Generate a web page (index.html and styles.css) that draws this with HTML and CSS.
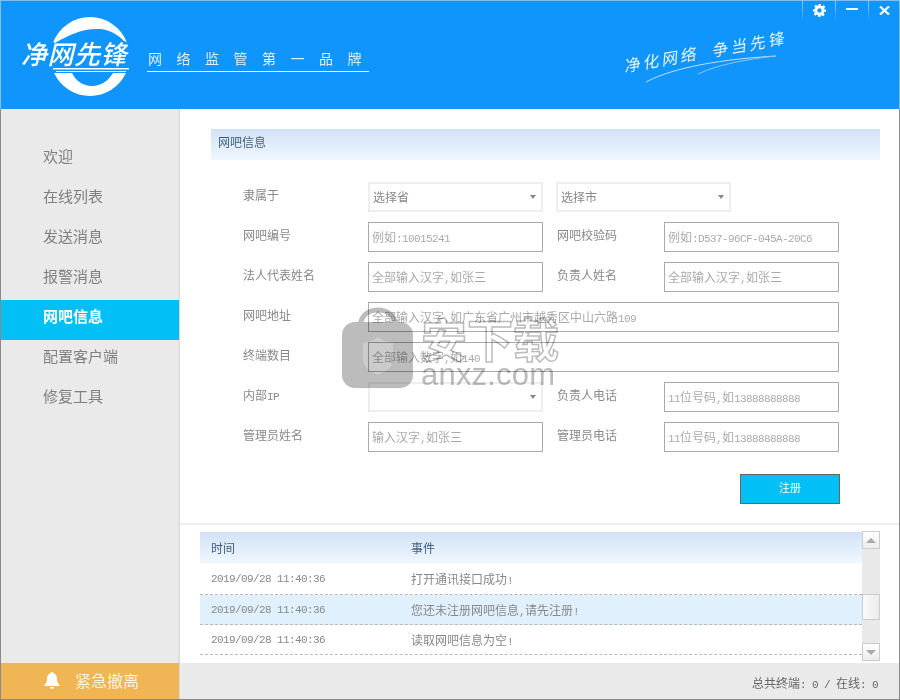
FILE: index.html
```html
<!DOCTYPE html>
<html lang="zh-CN">
<head>
<meta charset="utf-8">
<title>净网先锋</title>
<link rel="stylesheet" href="styles.css">
</head>
<body>
<div class="window">
  <header class="header">
    <svg class="logo-mark" width="90" height="84" viewBox="50 15 90 84">
      <path fill="#fff" d="M53.300 42A39.500 39.500 0 0 1 126.700 42L124 41C117 34 110 30 100 29C84 28 70 34 55 43Z"/>
      <path fill="#fff" d="M54.100 73H72C76 81 83 86 92 86C101 86 108 81 113 73H125.900A39.500 39.500 0 0 1 54.100 73Z"/>
      <path fill="#fff" d="M53 68H129V69.500H53ZM56 71H126V72H56Z"/>
    </svg>
    <div class="logo-text">净网先锋</div>
    <div class="tagline">网络监管第一品牌</div>
    <div class="slogan">净化网络&nbsp;&nbsp;争当先锋</div>
    <svg class="swoosh" width="145" height="40" viewBox="0 0 145 40">
      <path fill="none" stroke="#bcdffb" stroke-width="1" d="M2 35C30 20 80 12 132 9"/>
      <path fill="none" stroke="#8cc8f8" stroke-width="1" d="M54 27C75 17 105 12 132 9"/>
    </svg>
    <div class="winbtns">
      <div class="winbtn">
        <svg width="13" height="13" viewBox="0 0 24 24"><path fill="#fff" fill-rule="evenodd" d="M10 0h4l.6 3.300 2.300 1 2.800-1.900 2.900 2.900-1.900 2.800 1 2.300L24 10.000v4l-3.300.6-1 2.300 1.900 2.800-2.900 2.900-2.800-1.900-2.300 1L14 24h-4l-.6-3.300-2.300-1-2.800 1.900-2.900-2.900 1.900-2.800-1-2.300L0 14v-4l3.300-.6 1-2.300-1.900-2.800 2.900-2.900 2.800 1.900 2.300-1zM12 8a4 4 0 1 0 0 8 4 4 0 0 0 0-8z"/></svg>
      </div>
      <div class="winbtn"><span class="min-bar"></span></div>
      <div class="winbtn last">
        <svg width="11" height="9" viewBox="0 0 11 9"><path stroke="#fff" stroke-width="2.200" d="M1 .5l9 8M10 .5l-9 8"/></svg>
      </div>
    </div>
  </header>
  <div class="main">
    <aside class="sidebar">
      <nav class="nav">
        <div class="nav-item">欢迎</div>
        <div class="nav-item">在线列表</div>
        <div class="nav-item">发送消息</div>
        <div class="nav-item">报警消息</div>
        <div class="nav-item active">网吧信息</div>
        <div class="nav-item">配置客户端</div>
        <div class="nav-item">修复工具</div>
      </nav>
      <div class="alarm">
        <svg width="16" height="17" viewBox="0 0 16 17"><path fill="#fff" d="M8 0a1.500 1.500 0 0 1 1.400 1.300C12 2 13 4.500 13 7c0 3 1 4.500 2.500 6v1H.5v-1C2 11.500 3 10 3 7c0-2.500 1-5 3.600-5.700A1.500 1.500 0 0 1 8 0zM6 15h4a2 2 0 0 1-4 0z"/></svg>
        <span>紧急撤离</span>
      </div>
    </aside>
    <section class="content">
      <div class="panel">
        <div class="panel-title">网吧信息</div>
        <div class="form">
          <div class="row">
            <div class="lbl">隶属于</div>
            <div class="select"><span>选择省</span><i class="caret"></i></div>
            <div class="select second"><span>选择市</span><i class="caret"></i></div>
          </div>
          <div class="row">
            <div class="lbl">网吧编号</div>
            <div class="field">例如<span class="num">:10015241</span></div>
            <div class="lbl lbl2">网吧校验码</div>
            <div class="field">例如<span class="num">:D537-96CF-045A-20C6</span></div>
          </div>
          <div class="row">
            <div class="lbl">法人代表姓名</div>
            <div class="field">全部输入汉字<span class="num">,</span>如张三</div>
            <div class="lbl lbl2">负责人姓名</div>
            <div class="field">全部输入汉字<span class="num">,</span>如张三</div>
          </div>
          <div class="row">
            <div class="lbl">网吧地址</div>
            <div class="field wide">全部输入汉字<span class="num">,</span>如广东省广州市越秀区中山六路<span class="num">109</span></div>
          </div>
          <div class="row">
            <div class="lbl">终端数目</div>
            <div class="field wide">全部输入数字<span class="num">,</span>如<span class="num">140</span></div>
          </div>
          <div class="row">
            <div class="lbl">内部<span class="num">IP</span></div>
            <div class="select end"><i class="caret"></i></div>
            <div class="lbl lbl2">负责人电话</div>
            <div class="field"><span class="num">11</span>位号码<span class="num">,</span>如<span class="num">13888888888</span></div>
          </div>
          <div class="row">
            <div class="lbl">管理员姓名</div>
            <div class="field">输入汉字<span class="num">,</span>如张三</div>
            <div class="lbl lbl2">管理员电话</div>
            <div class="field"><span class="num">11</span>位号码<span class="num">,</span>如<span class="num">13888888888</span></div>
          </div>
        </div>
        <div class="actions"><div class="btn">注册</div></div>
      </div>
      <div class="log">
        <div class="log-table">
          <div class="log-head"><div class="c-time">时间</div><div>事件</div></div>
          <div class="log-row"><div class="c-time num">2019/09/28 11:40:36</div><div>打开通讯接口成功<span class="num">!</span></div></div>
          <div class="log-row alt"><div class="c-time num">2019/09/28 11:40:36</div><div>您还未注册网吧信息<span class="num">,</span>请先注册<span class="num">!</span></div></div>
          <div class="log-row"><div class="c-time num">2019/09/28 11:40:36</div><div>读取网吧信息为空<span class="num">!</span></div></div>
        </div>
        <div class="scrollbar">
          <div class="sb-btn"><i class="tri up"></i></div>
          <div class="sb-track"><div class="sb-thumb"></div></div>
          <div class="sb-btn"><i class="tri down"></i></div>
        </div>
      </div>
      <div class="status"><span>总共终端<span class="num">: 0 / </span>在线<span class="num">: 0</span></span></div>
    </section>
  </div>
  <div class="watermark">
    <svg width="72" height="82" viewBox="0 0 72 82">
      <path fill="none" stroke="#bcbcbc" stroke-width="5" d="M18 18C20 7 28 3 36 3C44 3 52 7 54 18"/>
      <rect x="0" y="15" width="71" height="66" rx="13" fill="#bcbcbc"/>
      <path fill="#cbcbcb" d="M21 36C28 35 32 33 36 30C40 33 45 35 51 36V52C51 61 43 65 36 68C29 65 21 61 21 52Z"/>
    </svg>
    <div class="wm-text">
      <div class="wm-cn">安下载</div>
      <div class="wm-en">anxz.com</div>
    </div>
  </div>
</div>
</body>
</html>
```
FILE: styles.css
```css
* { box-sizing: border-box; }
html, body { margin: 0; padding: 0; background: #fff; }
body { font-family: "Noto Sans CJK SC", "Liberation Sans", sans-serif; font-size: 12px; color: #888; }
.window { position: relative; width: 900px; height: 700px; display: flex; flex-direction: column; overflow: hidden; }
.header { position: relative; flex: 0 0 109px; background: #0f95fb; border: 1px solid #7fc0f2; border-bottom: 0; }
.logo-mark { position: absolute; left: 49px; top: 14px; }
.logo-text { position: absolute; left: 20px; top: 34px; color: #fff; font-size: 26px; line-height: 36px; font-style: italic; font-weight: 500; white-space: nowrap; letter-spacing: .5px; }
.tagline { position: absolute; left: 146px; top: 46px; width: 222px; height: 25px; padding-left: 1px; border-bottom: 1px solid #fff; color: #dff0fe; font-size: 14px; line-height: 22px; letter-spacing: 14.500px; white-space: nowrap; }
.slogan { position: absolute; left: 621px; top: 38px; color: #e6f3fe; font-size: 16px; line-height: 24px; letter-spacing: 3px; white-space: nowrap; transform: rotate(-10deg); font-style: italic; }
.swoosh { position: absolute; left: 643px; top: 46px; }
.winbtns { position: absolute; right: 0; top: 0; display: flex; }
.winbtn { width: 33px; height: 20px; display: flex; align-items: center; justify-content: center; border-left: 1px solid; border-image: linear-gradient(#9bd0f7, #0f95fb) 1; padding-bottom: 2px; }
.winbtn.last { width: 31px; }
.min-bar { display: block; width: 12px; height: 2px; background: #fff; margin-bottom: 2px; }
.main { flex: 1; display: flex; min-height: 0; border-left: 1px solid #8a8a8a; border-right: 1px solid #8a8a8a; border-bottom: 1px solid #8a8a8a; }
.sidebar { flex: 0 0 179px; display: flex; flex-direction: column; background: #eaeaea; box-shadow: inset -2px 0 2px -1px #d4d4d4; }
.nav { flex: 1; padding-top: 31px; }
.nav-item { height: 40px; line-height: 32px; padding-left: 42px; font-size: 15px; color: #808080; }
.nav-item.active { background: #02bff5; color: #fff; font-weight: 700; margin-right: 1px; }
.alarm { flex: 0 0 36px; display: flex; align-items: center; padding: 0 0 2px 43px; gap: 15px; background: #f0b655; color: #fdf3df; font-size: 16px; margin-right: 1px; }
.content { flex: 1; display: flex; flex-direction: column; min-width: 0; }
.panel { flex: 0 0 416px; padding: 20px 19px 0 31px; border-bottom: 2px solid #eee; }
.panel-title { height: 31px; line-height: 26px; padding-left: 7px; background: linear-gradient(#d2e2f5, #f0f7fe); color: #3f5f80; }
.form { padding: 22px 0 0 32px; }
.row { display: flex; height: 30px; margin-bottom: 10px; }
.lbl { width: 125px; line-height: 26px; color: #888; }
.lbl2 { width: 107px; margin-left: 14px; }
.field { width: 175px; height: 30px; border: 1px solid #aaa; padding-left: 3px; line-height: 27px; color: #aaa; white-space: nowrap; overflow: hidden; }
.field.wide { width: 471px; }
.select { width: 175px; height: 30px; border: 2px solid #eee; padding: 0 5px 1px 3px; display: flex; align-items: center; justify-content: space-between; color: #888; }
.select.second { margin-left: 13px; }
.select.end { justify-content: flex-end; }
.caret { display: block; width: 0; height: 0; border: 3px solid transparent; border-top: 4px solid #888; margin-top: 4px; }
.num { font-family: "Liberation Mono", "DejaVu Sans Mono", monospace; font-size: 11px; letter-spacing: -.600px; white-space: pre; }
.actions { display: flex; justify-content: flex-end; padding: 12px 40px 0 0; }
.btn { width: 100px; height: 30px; background: #02bff5; border: 1px solid #666; color: #fff; font-size: 11px; line-height: 24px; text-align: center; }
.log { flex: 1; display: flex; padding: 6px 0 0 20px; min-height: 0; }
.log-table { width: 662px; padding-top: 1px; }
.log-head { height: 31px; display: flex; align-items: center; padding-bottom: 1px; background: linear-gradient(#d2e2f5, #f0f7fe); color: #3f5f80; }
.log-row { height: 30px; display: flex; align-items: center; border-bottom: 1px dashed #b8b8b8; color: #888; }
.log-row.alt { background: #e1f0fd; }
.log-head + .log-row { height: 32px; }
.c-time { width: 211px; padding-left: 11px; flex: none; }
.scrollbar { width: 18px; height: 130px; display: flex; flex-direction: column; background: #e9e9e9; }
.sb-btn { flex: 0 0 18px; display: flex; align-items: center; justify-content: center; background: linear-gradient(#fff, #ececec); border: 1px solid #ccc; }
.sb-track { flex: 1; padding-top: 45px; }
.sb-thumb { height: 26px; background: linear-gradient(90deg, #fafafa, #ececec); border: 1px solid #ccc; }
.tri { display: block; width: 0; height: 0; border-left: 5px solid transparent; border-right: 5px solid transparent; }
.tri.up { border-bottom: 5px solid #aaa; }
.tri.down { border-top: 5px solid #aaa; }
.status { flex: 0 0 36px; display: flex; align-items: center; justify-content: flex-end; background: #eaeaea; padding: 6px 21px 0 0; line-height: 20px; color: #666; white-space: nowrap; }
.watermark { position: absolute; left: 342px; top: 307px; display: flex; gap: 7px; pointer-events: none; mix-blend-mode: multiply; }
.wm-text { display: flex; flex-direction: column; align-items: flex-start; padding-top: 6px; }
.wm-cn { font-size: 46px; line-height: 48px; font-weight: 700; color: #fff; -webkit-text-stroke: 1.500px #bcbcbc; white-space: nowrap; }
.wm-en { font-family: "Liberation Sans", sans-serif; font-size: 31px; line-height: 27px; color: #bcbcbc; letter-spacing: .2px; }
```
